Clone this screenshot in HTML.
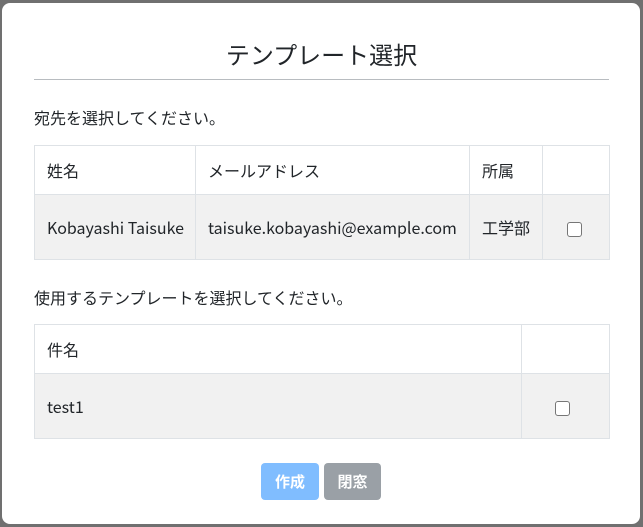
<!DOCTYPE html>
<html><head><meta charset="utf-8"><style>
body{margin:0;width:643px;height:527px;background:#707070;font-family:"Noto Sans CJK JP",sans-serif;color:#212529;overflow:hidden;position:relative}
.m{position:absolute;left:2px;top:3px;width:638px;height:521px;background:#fff;border-radius:8px}
.t{position:absolute;left:0;width:643px;top:36px;text-align:center;font-size:24px;line-height:36px;font-weight:400}
.hr{position:absolute;left:34px;top:79px;width:575px;height:1px;background:#b8bcc0}
.p{position:absolute;left:34px;font-size:16px;line-height:20px}
table{position:absolute;left:34px;width:576px;border-collapse:collapse;font-size:16px;table-layout:fixed}
td{border:1px solid #dee2e6;padding:0 12px;white-space:nowrap;overflow:hidden}
tr.h td{height:48px}
tr.b td{height:64px;background:#f1f1f1}
.cb{display:inline-block;width:13px;height:13px;border:1px solid #767676;border-radius:3px;background:#fff;vertical-align:middle}
.btn{position:absolute;top:463px;height:37px;width:58px;border-radius:4px;color:#fff;font-size:15px;font-weight:bold;line-height:37px;text-align:center}
</style></head><body>
<div class="m"></div>
<div class="t">テンプレート選択</div>
<div class="hr"></div>
<div class="p" style="top:107px">宛先を選択してください。</div>
<table style="top:145px">
<col style="width:161px"><col style="width:274px"><col style="width:73px"><col>
<tr class="h"><td>姓名</td><td>メールアドレス</td><td>所属</td><td></td></tr>
<tr class="b"><td>Kobayashi Taisuke</td><td>taisuke.kobayashi@example.com</td><td>工学部</td><td style="text-align:center;padding-right:16px"><span class="cb"></span></td></tr>
</table>
<div class="p" style="top:287px">使用するテンプレートを選択してください。</div>
<table style="top:324px">
<col style="width:487px"><col>
<tr class="h"><td>件名</td><td></td></tr>
<tr class="b"><td>test1</td><td style="text-align:center;padding-right:18px"><span class="cb"></span></td></tr>
</table>
<div class="btn" style="left:261px;background:#80bdff">作成</div>
<div class="btn" style="left:324px;width:57px;background:#9aa0a6">閉窓</div>
</body></html>
